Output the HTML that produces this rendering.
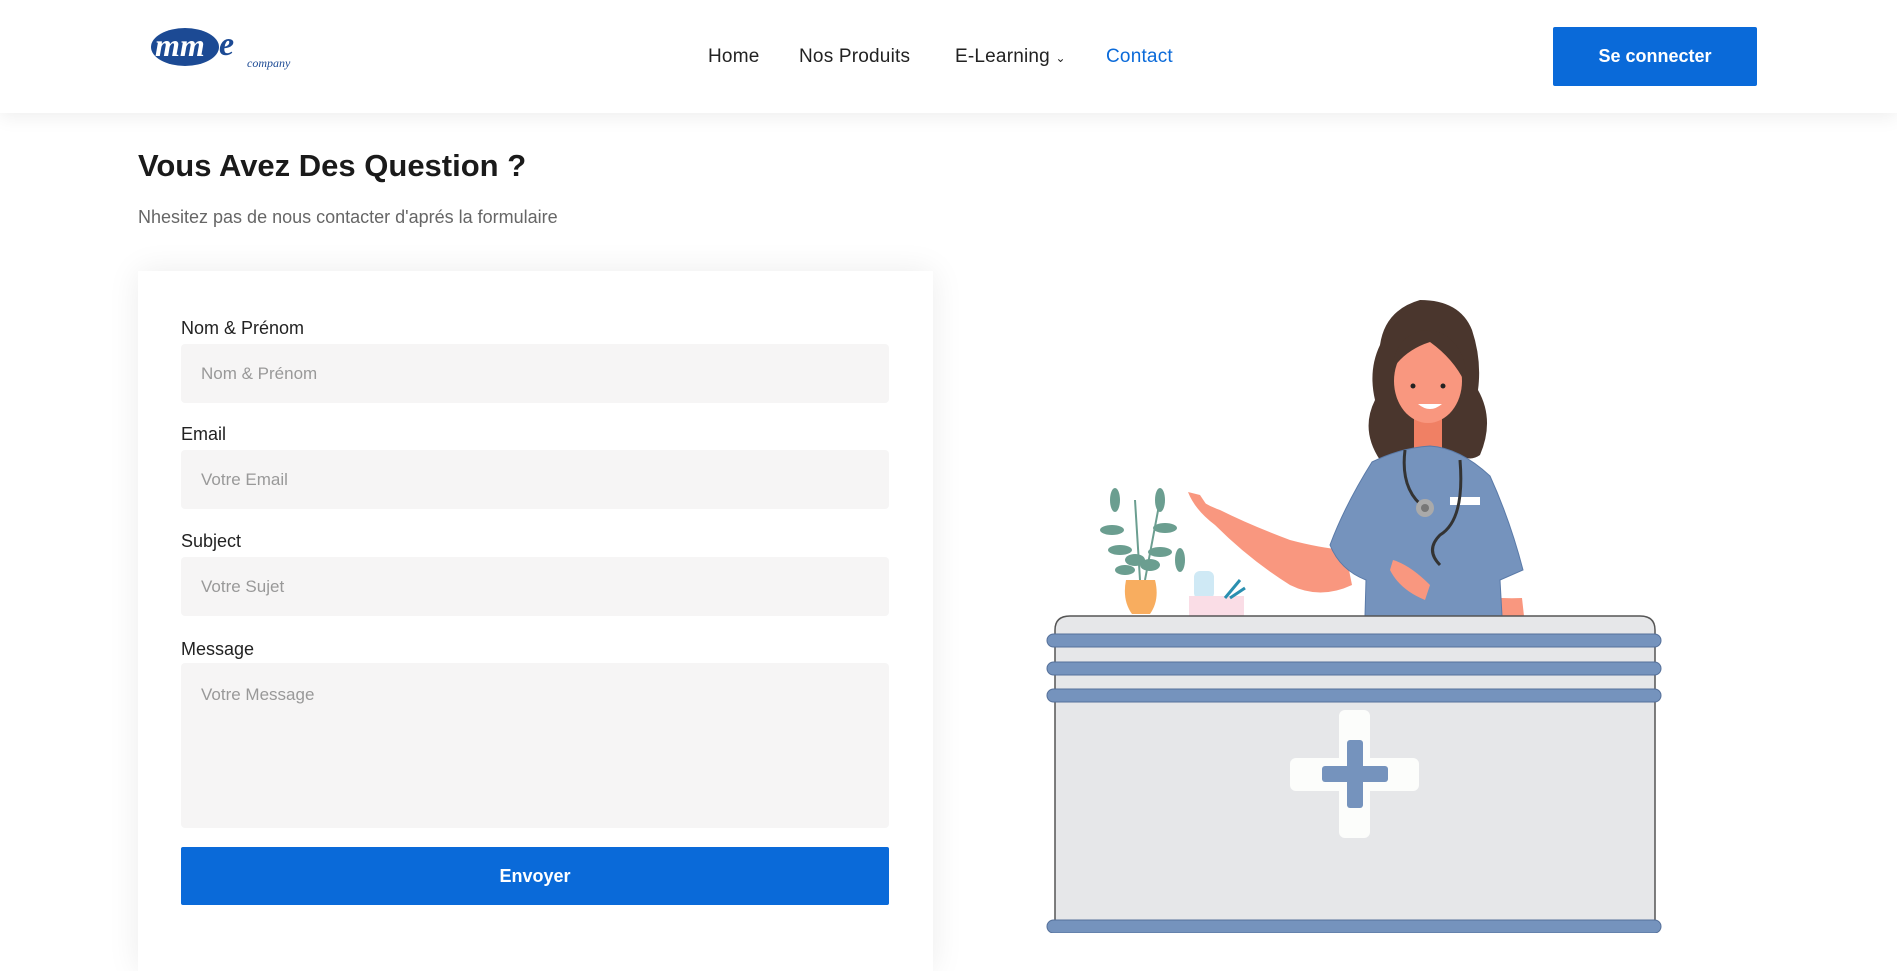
<!DOCTYPE html>
<html><head><meta charset="utf-8"><style>
*{margin:0;padding:0;box-sizing:border-box}
body{width:1897px;height:933px;overflow:hidden;background:#fff;font-family:"Liberation Sans",sans-serif;position:relative}
.hdr{position:absolute;left:0;top:0;width:1897px;height:113px;background:#fff;box-shadow:0 4px 18px rgba(0,0,0,0.07);z-index:2}
.nav{position:absolute;top:46px;font-size:19px;color:#222;letter-spacing:0.2px}
.btn{position:absolute;left:1553px;top:27px;width:204px;height:59px;background:#0a6ad9;color:#fff;font-weight:bold;font-size:18px;text-align:center;line-height:59px;border-radius:2px}
h1{position:absolute;left:138px;top:148px;font-size:31px;color:#1a1a1a;font-weight:bold}
.sub{position:absolute;left:138px;top:207px;font-size:18px;color:#666}
.card{position:absolute;left:138px;top:271px;width:795px;height:700px;background:#fff;box-shadow:0 0 30px rgba(0,0,0,0.08)}
.lbl{position:absolute;left:181px;font-size:18px;color:#222}
.inp{position:absolute;left:181px;width:708px;background:#f6f5f5;border-radius:4px;color:#999;font-size:17px;padding-left:20px}
.send{position:absolute;left:181px;top:847px;width:708px;height:58px;background:#0a6ad9;color:#fff;font-weight:bold;font-size:18px;text-align:center;line-height:58px;border-radius:2px}
</style></head><body>
<div class="hdr">
<svg style="position:absolute;left:151px;top:27px" width="165" height="45" viewBox="0 0 165 45">
<ellipse cx="34" cy="20" rx="34" ry="19" fill="#1c4a94"/>
<text x="4" y="29" font-family="Liberation Serif,serif" font-style="italic" font-size="32" fill="#fff" font-weight="bold">mm</text>
<text x="68" y="28" font-family="Liberation Serif,serif" font-style="italic" font-size="34" fill="#1c4a94" font-weight="bold">e</text>
<text x="96" y="40" font-family="Liberation Serif,serif" font-style="italic" font-size="12" fill="#1c4a94">company</text>
</svg>
<div class="nav" style="left:708px">Home</div>
<div class="nav" style="left:799px">Nos Produits</div>
<div class="nav" style="left:955px">E-Learning <span style="font-size:12px">&#8964;</span></div>
<div class="nav" style="left:1106px;color:#0a6ad9">Contact</div>
<div class="btn">Se connecter</div>
</div>
<h1>Vous Avez Des Question ?</h1>
<div class="sub">Nhesitez pas de nous contacter d'aprés la formulaire</div>
<div class="card"></div>
<div class="lbl" style="top:318px">Nom &amp; Prénom</div>
<div class="inp" style="top:344px;height:59px;line-height:59px">Nom &amp; Prénom</div>
<div class="lbl" style="top:424px">Email</div>
<div class="inp" style="top:450px;height:59px;line-height:59px">Votre Email</div>
<div class="lbl" style="top:531px">Subject</div>
<div class="inp" style="top:557px;height:59px;line-height:59px">Votre Sujet</div>
<div class="lbl" style="top:639px">Message</div>
<div class="inp" style="top:663px;height:165px;padding-top:22px">Votre Message</div>
<div class="send">Envoyer</div>
<svg style="position:absolute;left:0;top:0" width="1897" height="933" viewBox="0 0 1897 933">
<!-- hair back -->
<path d="M1380 460 Q1360 430 1375 400 Q1368 370 1380 345 Q1385 310 1420 300 Q1460 300 1472 330 Q1482 360 1478 390 Q1495 420 1480 455 Q1470 462 1460 455 L1395 455 Q1388 465 1380 460 Z" fill="#4a362d"/>
<!-- neck -->
<rect x="1414" y="410" width="28" height="40" fill="#f08064"/>
<!-- face -->
<ellipse cx="1428" cy="381" rx="34" ry="42" fill="#f9977f"/>
<path d="M1392 370 Q1395 335 1425 330 Q1450 330 1462 355 Q1468 370 1466 385 Q1455 360 1430 342 Q1405 350 1392 370 Z" fill="#4a362d"/>
<circle cx="1413" cy="386" r="2.5" fill="#222"/><circle cx="1443" cy="386" r="2.5" fill="#222"/>
<path d="M1418 404 Q1430 414 1442 404 Z" fill="#fff"/>
<!-- arm -->
<path d="M1188 492 Q1205 505 1220 510 Q1250 525 1290 540 Q1320 548 1345 550 L1352 585 Q1320 600 1290 585 Q1250 560 1215 525 Q1195 510 1188 492 Z" fill="#f9977f"/>
<path d="M1188 492 L1200 495 L1210 510 Z" fill="#f9977f"/>
<path d="M1420 585 Q1480 600 1522 598 L1524 616 L1470 616 Q1440 610 1420 600 Z" fill="#f9977f"/>
<!-- shirt -->
<path d="M1372 462 Q1400 448 1430 446 Q1460 448 1490 476 Q1510 520 1523 570 L1500 580 L1502 616 L1365 616 L1366 580 Q1340 570 1330 545 Q1345 505 1372 462 Z" fill="#7593bd" stroke="#5a7aa8" stroke-width="1"/>
<path d="M1393 560 Q1410 565 1430 585 L1425 600 Q1400 590 1390 570 Z" fill="#f9977f"/>
<rect x="1450" y="497" width="30" height="8" fill="#fff"/>
<path d="M1405 450 Q1400 490 1425 508 M1460 460 Q1465 520 1440 535 Q1425 550 1440 565" stroke="#333" stroke-width="3" fill="none"/>
<circle cx="1425" cy="508" r="9" fill="#aaa"/><circle cx="1425" cy="508" r="4" fill="#777"/>
<!-- plant -->
<path d="M1140 580 L1135 500 M1145 580 L1160 500" stroke="#6b9e90" stroke-width="2"/>
<path d="M1126 580 L1155 580 Q1160 600 1150 614 L1132 614 Q1122 600 1126 580 Z" fill="#f8ad5f"/>
<g fill="#6b9e90">
<ellipse cx="1115" cy="500" rx="5" ry="12"/><ellipse cx="1160" cy="500" rx="5" ry="12"/>
<ellipse cx="1112" cy="530" rx="12" ry="5"/><ellipse cx="1165" cy="528" rx="12" ry="5"/>
<ellipse cx="1120" cy="550" rx="12" ry="5"/><ellipse cx="1160" cy="552" rx="12" ry="5"/>
<ellipse cx="1135" cy="560" rx="10" ry="6"/><ellipse cx="1150" cy="565" rx="10" ry="6"/>
<ellipse cx="1180" cy="560" rx="5" ry="12"/><ellipse cx="1125" cy="570" rx="10" ry="5"/>
</g>
<rect x="1194" y="571" width="20" height="28" rx="6" fill="#cfe9f5"/>
<rect x="1189" y="596" width="55" height="20" fill="#fadde6"/>
<path d="M1225 598 L1240 580 M1230 598 L1245 588" stroke="#2a8fb0" stroke-width="3"/>
<!-- desk -->
<path d="M1055 930 L1055 630 Q1055 616 1070 616 L1640 616 Q1655 616 1655 630 L1655 930 Z" fill="#e6e7e9" stroke="#555" stroke-width="1.5"/>
<rect x="1047" y="634" width="614" height="13" rx="6.5" fill="#7593bd" stroke="#55709a"/>
<rect x="1047" y="662" width="614" height="13" rx="6.5" fill="#7593bd" stroke="#55709a"/>
<rect x="1047" y="689" width="614" height="13" rx="6.5" fill="#7593bd" stroke="#55709a"/>
<rect x="1047" y="920" width="614" height="13" rx="6.5" fill="#7593bd" stroke="#55709a"/>
<rect x="1339" y="710" width="31" height="128" rx="6" fill="#fcfdfb"/>
<rect x="1290" y="758" width="129" height="33" rx="6" fill="#fcfdfb"/>
<rect x="1347" y="740" width="16" height="68" rx="3" fill="#7593bd"/>
<rect x="1322" y="766" width="66" height="16" rx="3" fill="#7593bd"/>
</svg>
</body></html>
